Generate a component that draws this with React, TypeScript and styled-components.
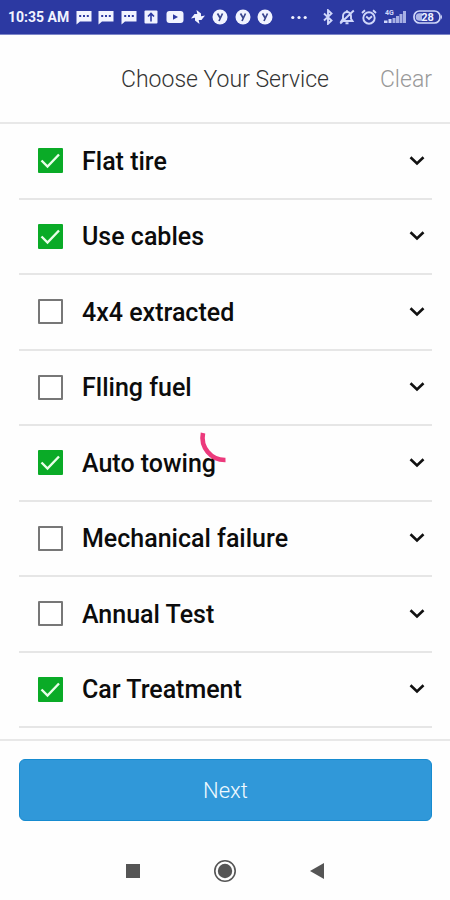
import React, { useState } from "react";
import styled, { createGlobalStyle } from "styled-components";

const GlobalStyle = createGlobalStyle`
  *, *::before, *::after { box-sizing: border-box; }
  body {
    margin: 0;
    background: #fefefe;
    font-family: Roboto, "Liberation Sans", sans-serif;
  }
  button { font: inherit; border: 0; padding: 0; background: none; cursor: pointer; }
`;

const Screen = styled.div`
  position: relative;
  display: flex;
  flex-direction: column;
  min-height: 100vh;
`;

const StatusBar = styled.div`
  display: flex;
  align-items: center;
  height: 35px;
  padding: 0 7px 0 8px;
  background: #2c39a2;
  border-bottom: 1px solid #7d86c8;
  color: #f1f3ff;
`;

const Clock = styled.time`
  width: 68px;
  font-size: 14px;
  font-weight: 700;
  line-height: 20px;
  white-space: nowrap;
`;

const Notifications = styled.div`
  display: flex;
  justify-content: space-between;
  width: 197px;
`;

const SystemIcons = styled.div`
  display: flex;
  align-items: center;
  gap: 6px;
  margin-left: auto;
  color: #d0d7fa;
`;

const Overflow = styled.span`
  margin-right: 10px;
  color: #f1f3ff;
`;

const Glyph = styled.svg`
  display: block;
  flex: none;
  fill: currentColor;
`;

const Header = styled.header`
  display: grid;
  grid-template-columns: 1fr auto 1fr;
  align-items: center;
  height: 89px;
  padding: 2px 18px 0;
  border-bottom: 2px solid #e8e8e8;
`;

const Title = styled.h1`
  grid-column: 2;
  margin: 0;
  color: #333;
  font-size: 23px;
  font-weight: 300;
  line-height: 28px;
  white-space: nowrap;
`;

const ClearButton = styled.button`
  justify-self: end;
  color: #999;
  font-size: 23px;
  font-weight: 300;
  line-height: 28px;
`;

const ServiceList = styled.ul`
  display: flex;
  flex: 1;
  flex-direction: column;
  margin: 0;
  padding: 0 18px 11px 19px;
  list-style: none;
`;

const ServiceRow = styled.li`
  display: flex;
  flex: 1;
  align-items: center;
  min-height: 56px;
  padding: 0 5px 0 19px;
  border-bottom: 2px solid #e6e6e6;
`;

const ServiceLabel = styled.label`
  display: flex;
  flex: 1;
  align-items: center;
  gap: 19px;
  color: #0c0c0c;
  font-size: 25px;
  font-weight: 500;
  line-height: 32px;
`;

const ServiceName = styled.span`
  padding-top: 2px;
`;

const CheckFrame = styled.span`
  display: grid;
  flex: none;
  width: 25px;
  height: 25px;
  > * { grid-area: 1 / 1; }
`;

const CheckInput = styled.input`
  width: 25px;
  height: 25px;
  margin: 0;
  appearance: none;
  border: 2px solid #777;
  border-radius: 1px;
  background: #fff;
  &:checked { border-color: #0aab27; background: #0aab27; }
  &:not(:checked) + svg { visibility: hidden; }
`;

const CheckMark = styled.svg`
  width: 25px;
  height: 25px;
  fill: none;
  stroke: #e9ffe9;
  stroke-width: 2.4;
  pointer-events: none;
`;

const ExpandButton = styled.button`
  display: grid;
  place-items: center;
  width: 20px;
  height: 32px;
`;

const Footer = styled.footer`
  padding: 18px 18px 20px 19px;
  border-top: 2px solid #e8e8e8;
`;

const NextButton = styled.button`
  display: block;
  width: 100%;
  height: 62px;
  padding-top: 2px;
  border: 1px solid #168bd0;
  border-radius: 6px;
  background: #3098d9;
  color: #f0faff;
  font-size: 22px;
  font-weight: 300;
  line-height: 28px;
`;

const NavBar = styled.nav`
  display: flex;
  align-items: center;
  justify-content: center;
  gap: 66px;
  height: 59px;
`;

const NavButton = styled.button`
  display: grid;
  place-items: center;
  width: 26px;
  height: 26px;
`;

const Spinner = styled.svg`
  position: absolute;
  top: 50%;
  left: 50%;
  width: 56px;
  height: 56px;
  transform: translate(-50%, -50%);
  fill: none;
  stroke: #ec3a7c;
  stroke-width: 4.6;
  pointer-events: none;
`;

const ChatIcon = () => (
  <Glyph width="16" height="16" viewBox="0 0 16 16">
    <path d="M0.500 2h15v10.500H4L0.500 15.500z" />
    <path d="M3.200 6h2v2h-2zM7 6h2v2H7zM10.800 6h2v2h-2z" fill="#2c39a2" />
  </Glyph>
);

const UploadIcon = () => (
  <Glyph width="16" height="16" viewBox="0 0 16 16">
    <rect x="1.500" y="1.500" width="13" height="13" rx="1" />
    <path d="M8 12.500V4.500M5 7.500l3-3 3 3" fill="none" stroke="#2c39a2" strokeWidth="1.600" />
  </Glyph>
);

const VideoIcon = () => (
  <Glyph width="18" height="16" viewBox="0 0 18 16">
    <rect x="0.500" y="2" width="17" height="12" rx="3" />
    <path d="M7 5.200v5.600L12 8z" fill="#2c39a2" />
  </Glyph>
);

const PinwheelIcon = () => (
  <Glyph width="16" height="16" viewBox="0 0 16 16">
    {[0, 90, 180, 270].map((angle) => (
      <path key={angle} d="M8 8.500L6.500 1l4.500 3.500V8z" transform={`rotate(${angle} 8 8)`} />
    ))}
  </Glyph>
);

const RoundYIcon = () => (
  <Glyph width="16" height="16" viewBox="0 0 16 16">
    <circle cx="8" cy="8" r="7.500" />
    <path d="M5.500 4.500L8 8.800M10.500 4.500L7 12" fill="none" stroke="#3a468f" strokeWidth="1.700" />
  </Glyph>
);

const MoreIcon = () => (
  <Glyph width="16" height="16" viewBox="0 0 16 16">
    <circle cx="1.800" cy="8.500" r="1.600" />
    <circle cx="8" cy="8.500" r="1.600" />
    <circle cx="14.200" cy="8.500" r="1.600" />
  </Glyph>
);

const BluetoothIcon = () => (
  <Glyph width="10" height="16" viewBox="0 0 10 16">
    <path d="M1 4.500l7.500 7L5 14.800V1.200l3.500 3.300L1 11.500" fill="none" stroke="currentColor" strokeWidth="1.900" />
  </Glyph>
);

const MutedBellIcon = () => (
  <Glyph width="16" height="16" viewBox="0 0 16 16">
    <path
      d="M2.500 12h11L12 9.700V7A4 4 0 0 0 8 3 4 4 0 0 0 4 7v2.700zM6.500 14.200h3M8 1.200v2M1.200 14.500L14.800 1.500"
      fill="none"
      stroke="currentColor"
      strokeWidth="1.900"
    />
  </Glyph>
);

const AlarmIcon = () => (
  <Glyph width="16" height="16" viewBox="0 0 16 16">
    <circle cx="8" cy="9" r="5.700" fill="none" stroke="currentColor" strokeWidth="1.900" />
    <path d="M5.200 7.500L8 10l3-2.800M1 4l3-2.800M15 4l-3-2.800" fill="none" stroke="currentColor" strokeWidth="1.900" />
  </Glyph>
);

const SignalIcon = () => (
  <Glyph width="24" height="16" viewBox="0 0 24 16">
    <text x="2" y="5.500" fontSize="7" fontWeight="700">4G</text>
    <path d="M1 11.500h3.500V14H1zM5.500 10h3v4h-3z" />
    <path d="M9.500 9h3v5h-3zM13 7h3v7h-3zM16.500 5h3v9h-3zM20 2h3v12h-3z" opacity="0.750" />
  </Glyph>
);

const BatteryIcon = () => (
  <Glyph width="30" height="16" viewBox="0 0 30 16">
    <rect x="1" y="2" width="26" height="12" rx="5.500" fill="none" stroke="currentColor" strokeWidth="1.700" />
    <path d="M6.500 4.200H9v7.600H6.500a3.800 3.800 0 0 1 0-7.600z" opacity="0.800" />
    <path d="M28 5.500q2 2.500 0 5z" />
    <text x="14.500" y="12" fontSize="11" fontWeight="700" textAnchor="middle" fill="#f1f3ff">28</text>
  </Glyph>
);

const services = [
  { id: "flat-tire", name: "Flat tire", selected: true },
  { id: "cables", name: "Use cables", selected: true },
  { id: "extraction", name: "4x4 extracted", selected: false },
  { id: "fuel", name: "Flling fuel", selected: false },
  { id: "towing", name: "Auto towing", selected: true },
  { id: "mechanical", name: "Mechanical failure", selected: false },
  { id: "annual-test", name: "Annual Test", selected: false },
  { id: "treatment", name: "Car Treatment", selected: true },
];

export default function App() {
  const [selected, setSelected] = useState<string[]>(
    services.filter((s) => s.selected).map((s) => s.id)
  );

  const toggle = (id: string) =>
    setSelected((prev) => (prev.includes(id) ? prev.filter((x) => x !== id) : [...prev, id]));

  return (
    <Screen>
      <GlobalStyle />
      <StatusBar>
        <Clock>10:35 AM</Clock>
        <Notifications>
          <ChatIcon />
          <ChatIcon />
          <ChatIcon />
          <UploadIcon />
          <VideoIcon />
          <PinwheelIcon />
          <RoundYIcon />
          <RoundYIcon />
          <RoundYIcon />
        </Notifications>
        <SystemIcons>
          <Overflow>
            <MoreIcon />
          </Overflow>
          <BluetoothIcon />
          <MutedBellIcon />
          <AlarmIcon />
          <SignalIcon />
          <BatteryIcon />
        </SystemIcons>
      </StatusBar>

      <Header>
        <Title>Choose Your Service</Title>
        <ClearButton type="button" onClick={() => setSelected([])}>Clear</ClearButton>
      </Header>

      <ServiceList>
        {services.map(({ id, name }) => (
          <ServiceRow key={id}>
            <ServiceLabel htmlFor={id}>
              <CheckFrame>
                <CheckInput
                  id={id}
                  type="checkbox"
                  checked={selected.includes(id)}
                  onChange={() => toggle(id)}
                />
                <CheckMark viewBox="0 0 25 25" aria-hidden="true">
                  <path d="M3.500 12.500l6 6L21 6.500" />
                </CheckMark>
              </CheckFrame>
              <ServiceName>{name}</ServiceName>
            </ServiceLabel>
            <ExpandButton type="button" aria-label={`Show ${name} options`}>
              <svg width="16" height="10" viewBox="0 0 16 10" fill="none" stroke="#111" strokeWidth="2.600">
                <path d="M1.500 1.200L8 7.500l6.500-6.300" />
              </svg>
            </ExpandButton>
          </ServiceRow>
        ))}
      </ServiceList>

      <Footer>
        <NextButton type="button">Next</NextButton>
      </Footer>

      <NavBar>
        <NavButton type="button" aria-label="Recent apps">
          <svg width="16" height="16" viewBox="0 0 16 16" fill="#555">
            <rect x="1" y="1" width="14" height="14" />
          </svg>
        </NavButton>
        <NavButton type="button" aria-label="Home">
          <svg width="24" height="24" viewBox="0 0 24 24">
            <circle cx="12" cy="12" r="10.200" fill="none" stroke="#555" strokeWidth="1.600" />
            <circle cx="12" cy="12" r="7.200" fill="#555" />
          </svg>
        </NavButton>
        <NavButton type="button" aria-label="Back">
          <svg width="16" height="18" viewBox="0 0 16 18" fill="#555">
            <path d="M1 9L15 1v16z" />
          </svg>
        </NavButton>
      </NavBar>

      <Spinner viewBox="0 0 56 56" role="img" aria-label="Loading">
        <path d="M6 11A22.500 22.500 0 0 0 28.500 38" />
      </Spinner>
    </Screen>
  );
}
